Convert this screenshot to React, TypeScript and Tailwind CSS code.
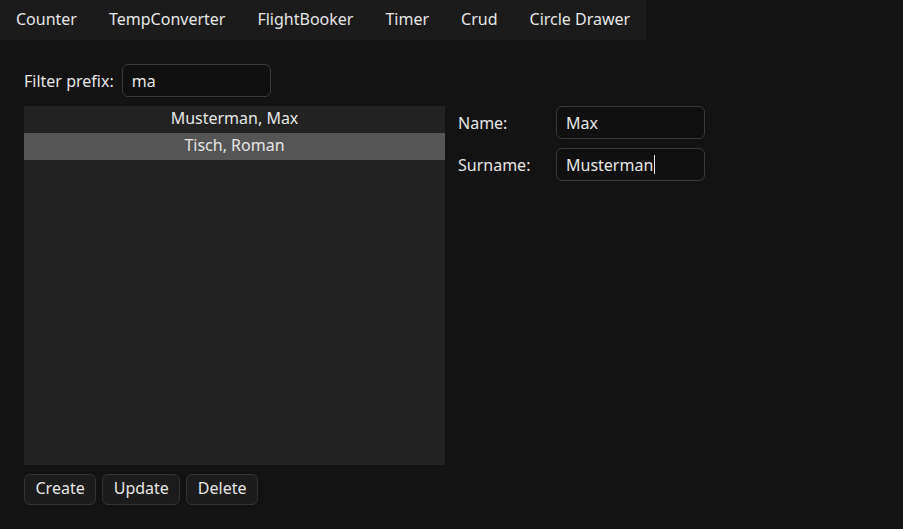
const tabs = ["Counter", "TempConverter", "FlightBooker", "Timer", "Crud", "Circle Drawer"];

const people = ["Musterman, Max", "Tisch, Roman"];

const App = () => {
  return (
    <div className="min-h-screen w-full bg-[#131313] text-[#e6e6e6] text-base font-['Noto_Sans',sans-serif]">
      <nav className="flex w-fit h-10 items-center bg-[#1b1b1b] pb-[2px]">
        {tabs.map((t) => (
          <a key={t} href="#" className="px-4 leading-none">
            {t}
          </a>
        ))}
      </nav>

      <div className="px-6 pt-6">
        <div className="flex items-center gap-2">
          <span>Filter prefix:</span>
          <div className="flex h-[33px] w-[149px] items-center rounded-md border border-[#3a3a3a] bg-[#101010] px-[9px]">
            ma
          </div>
        </div>

        <div className="mt-[9px] flex">
          <ul className="h-[359px] w-[421px] bg-[#222222]">
            {people.map((p, i) => (
              <li
                key={p}
                className={
                  "flex h-[27px] items-center justify-center pb-1 " +
                  (i === 1 ? "bg-[#555555]" : "")
                }
              >
                {p}
              </li>
            ))}
          </ul>

          <div className="ml-[13px] flex flex-col gap-[9px]">
            <div className="flex items-center">
              <span className="w-[98px]">Name:</span>
              <div className="flex h-[33px] w-[149px] items-center rounded-md border border-[#3a3a3a] bg-[#101010] px-[9px]">
                Max
              </div>
            </div>
            <div className="flex items-center">
              <span className="w-[98px]">Surname:</span>
              <div className="flex h-[33px] w-[149px] items-center rounded-md border border-[#3a3a3a] bg-[#101010] px-[9px]">
                Musterman
                <span className="ml-px inline-block h-[19px] w-px bg-[#e6e6e6]" />
              </div>
            </div>
          </div>
        </div>

        <div className="mt-[9px] flex gap-[6px]">
          {["Create", "Update", "Delete"].map((b) => (
            <button
              key={b}
              className="h-[31px] rounded-md border border-[#333333] bg-[#1c1c1c] px-[10.5px] pb-1"
            >
              {b}
            </button>
          ))}
        </div>
      </div>
    </div>
  );
};

export default App;
